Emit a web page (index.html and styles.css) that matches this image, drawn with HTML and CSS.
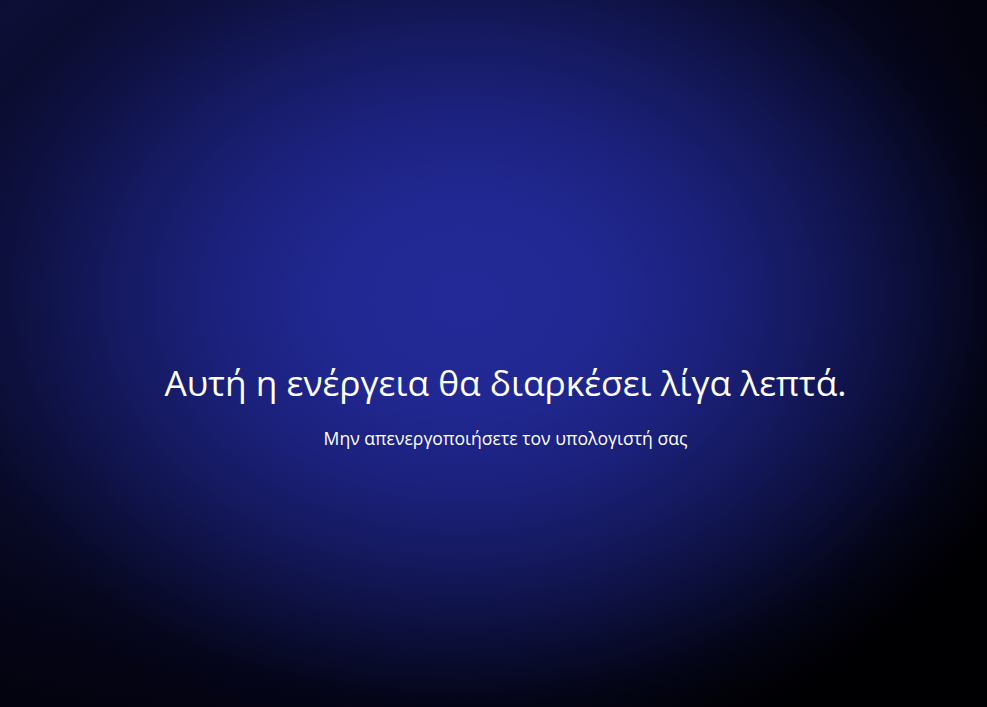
FILE: index.html
```html
<!DOCTYPE html>
<html lang="el">
<head>
<meta charset="utf-8">
<title>Windows Update</title>
<link rel="stylesheet" href="styles.css">
</head>
<body>
<main class="screen">
  <div class="message">
    <h1 class="title">Αυτή η ενέργεια θα διαρκέσει λίγα λεπτά.</h1>
    <p class="subtitle">Μην απενεργοποιήσετε τον υπολογιστή σας</p>
  </div>
</main>
</body>
</html>
```
FILE: styles.css
```css
html, body {
  margin: 0;
  padding: 0;
  height: 100%;
}
body {
  background: #000;
  font-family: "Open Sans", "Noto Sans", "DejaVu Sans", sans-serif;
  color: #fff;
}
.screen {
  height: 707px;
  box-sizing: border-box;
  padding-left: 24px;
  display: flex;
  justify-content: center;
  background:
    radial-gradient(ellipse 590px 450px at 465px 300px,
      rgba(35, 42, 152, 1) 0%,
      rgba(33, 40, 146, 1) 22%,
      rgba(28, 34, 128, 0.95) 42%,
      rgba(22, 27, 102, 0.85) 60%,
      rgba(14, 18, 70, 0.7) 76%,
      rgba(6, 8, 36, 0.4) 90%,
      rgba(0, 0, 0, 0) 100%),
    radial-gradient(ellipse 900px 700px at 250px 150px,
      #111245 0%,
      #0c0d30 45%,
      #040414 75%,
      #000003 100%);
}
.message {
  padding-top: 360px;
  text-align: center;
}
.title {
  margin: 0;
  font-size: 35.3px;
  font-weight: 400;
  line-height: 44px;
  letter-spacing: 0;
}
.subtitle {
  margin: 22px 0 0;
  font-size: 17.6px;
  line-height: 24px;
}
```
